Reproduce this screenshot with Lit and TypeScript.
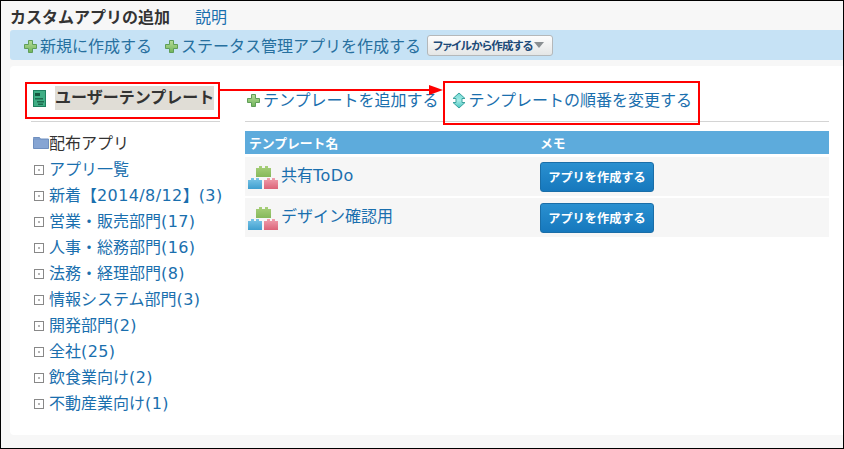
import { LitElement, html, css, svg } from "lit";
import { customElement } from "lit/decorators.js";

const plus = (id: string) => html`<svg class="plus" width="13" height="13" viewBox="0 0 13 13"><defs><linearGradient id=${id} x1="0" y1="0" x2="0" y2="1"><stop offset="0" stop-color="#b6dc98"/><stop offset="1" stop-color="#71b45a"/></linearGradient></defs><path d="M4.500.5h4v4h4v4h-4v4h-4v-4h-4v-4h4z" fill="url(#${id})" stroke="#5f9e58" stroke-linejoin="round"/></svg>`;

const blocks = (id: string) => html`<svg class="blocks" width="30" height="23" viewBox="0 0 30 23"><defs>
  <linearGradient id="${id}g" x1="0" y1="0" x2="0" y2="1"><stop offset="0" stop-color="#a8d07a"/><stop offset="1" stop-color="#86b85a"/></linearGradient>
  <linearGradient id="${id}b" x1="0" y1="0" x2="0" y2="1"><stop offset="0" stop-color="#7cc6e8"/><stop offset="1" stop-color="#3f9fcf"/></linearGradient>
  <linearGradient id="${id}r" x1="0" y1="0" x2="0" y2="1"><stop offset="0" stop-color="#f0a0ae"/><stop offset="1" stop-color="#dc6478"/></linearGradient></defs>
  <path d="M8 2h3V0h3v2h3V0h3v2h3v9H8z" fill="url(#${id}g)"/>
  <path d="M0 14h3v-2h3v2h2v-2h3v2h3v9H0z" fill="url(#${id}b)"/>
  <path d="M16 14h3v-2h3v2h2v-2h3v2h3v9H16z" fill="url(#${id}r)"/></svg>`;

const folder = html`<svg class="folder" width="16" height="13" viewBox="0 0 16 13"><path d="M.5 2.500V1.500h6l1 1.500h8v9.500H.5z" fill="#7d9ccb" stroke="#6f8fbf"/><rect x="1" y="4" width="14" height="8" fill="#86a5d3"/></svg>`;

const latin = (t: string) => t.split(/([0-9A-Za-z()\/]+)/).map((p, i) => (i % 2 ? html`<span class="lat">${p}</span>` : p));

const cats = ["アプリ一覧","新着【2014/8/12】(3)","営業・販売部門(17)","人事・総務部門(16)","法務・経理部門(8)","情報システム部門(3)","開発部門(2)","全社(25)","飲食業向け(2)","不動産業向け(1)"];
const rows = [["共有ToDo","a"],["デザイン確認用","b"]];

@customElement("app-root")
export class AppRoot extends LitElement {
  static styles = css`
    :host { display:block; width:844px; height:449px; box-sizing:border-box; border:1px solid #000; background:#f7f7f7; position:relative; overflow:hidden; font-family:"DejaVu Sans","Noto Sans CJK JP",sans-serif; font-size:16px; color:#0f6fb0; }
    a { color:#1a6fae; text-decoration:none; }
    .lat { letter-spacing:.4px; }
    .title { display:flex; align-items:center; height:29px; padding-left:9px; gap:25px; }
    .title b { color:#333; font-size:16px; font-weight:700; }
    .title a { font-size:16px; }
    .toolbar { height:30px; margin-left:9px; background:#c6e2f5; border-radius:3px 0 0 3px; display:flex; align-items:center; padding-left:14px; }
    .tool { display:flex; align-items:center; gap:3px; margin-right:13px; color:#27709f; white-space:nowrap; }
    .tool svg { margin-top:2px; }
    .tool:nth-child(2) { margin-right:6px; }
    .file { box-sizing:border-box; width:126px; height:21px; display:flex; align-items:center; padding-left:5px; gap:2px; border:1px solid #b4b8ba; border-radius:3px; background:linear-gradient(#fdfdfd,#e4e6e6); color:#1d4a78; font-size:11.500px; letter-spacing:-.7px; font-weight:700; white-space:nowrap; font-feature-settings:"palt"; }
    .tri { width:0; height:0; border-left:5px solid transparent; border-right:5px solid transparent; border-top:6px solid #8a8f92; }
    .panel { margin:6px 0 0 9px; height:369px; background:#fff; border-radius:4px 0 0 4px; display:flex; padding-top:16px; box-sizing:border-box; }
    .left { width:189px; margin-left:21px; flex:none; }
    .heading { height:40px; border-bottom:1px solid #d4d4d4; display:flex; align-items:center; box-sizing:border-box; padding:0 0 7px 2px; gap:9px; }
    .heading b { background:#e0ddd6; color:#333; font-size:16px; line-height:24px; font-weight:700; white-space:nowrap; }
    ul { list-style:none; margin:7px 0 0; padding:0 0 0 2px; }
    li { height:26px; display:flex; align-items:center; gap:5px; white-space:nowrap; }
    li.root { color:#333; gap:0; }
    .box { width:8px; height:8px; border:1px solid #888; position:relative; margin:3px 0 0 1px; flex:none; }
    .box::after { content:""; position:absolute; left:3px; top:3px; width:2px; height:2px; background:#333; transform:scale(.6); }
    .right { flex:1; margin:0 14px 0 25px; min-width:0; }
    .actions { height:40px; box-sizing:border-box; border-bottom:1px solid #d4d4d4; display:flex; align-items:center; padding:1px 0 7px 2px; white-space:nowrap; }
    .actions a { display:flex; align-items:center; }
    .actions a svg { margin-top:4px; }
    .actions a:first-child { gap:3px; margin-right:13px; }
    .actions a:last-child { gap:3px; }
    .thead { margin-top:9px; height:23px; background:#5dabdc; color:#fff; font-size:12.800px; font-weight:700; display:flex; align-items:center; padding-left:4px; }
    .c1 { width:291px; flex:none; display:flex; align-items:center; gap:3px; }
    .row { margin-top:3px; height:39px; background:#f6f6f6; display:flex; align-items:center; padding-left:3px; }
    .row + .row { margin-top:2px; }
    .row .c1 { width:292px; }
    .row a { margin-top:-6px; }
    .blocks { margin-top:2px; }
    .btn { box-sizing:border-box; width:114px; height:30px; margin-top:1px; border:1px solid #1a6ea8; border-radius:3px; background:linear-gradient(#2a90d0,#1678bd); color:#fff; font:700 12.200px "Noto Sans CJK JP",sans-serif; padding:0; white-space:nowrap; }
    .mark { position:absolute; border:2px solid #f00; box-sizing:border-box; pointer-events:none; }
    .m1 { left:24px; top:81px; width:195px; height:37px; }
    .m2 { left:442px; top:80px; width:257px; height:44px; }
    .arrow { position:absolute; left:218px; top:84px; pointer-events:none; }
  `;
  render() {
    return html`
      <div class="title"><b>カスタムアプリの追加</b><a>説明</a></div>
      <div class="toolbar">
        <span class="tool">${plus("p1")}新規に作成する</span>
        <span class="tool">${plus("p2")}ステータス管理アプリを作成する</span>
        <span class="file">ファイルから作成する<i class="tri"></i></span>
      </div>
      <div class="panel">
        <div class="left">
          <div class="heading">
            <svg width="13" height="17" viewBox="0 0 13 17"><rect x=".5" y=".5" width="12" height="16" fill="#3fae84" stroke="#1f7f5f"/><path d="M2 3h5v3H2z" fill="#15573f"/><path d="M2 8h8v1.500H2zM4 11h7v1.500H4zM5 13.500h5V15H5z" fill="#1e6a4e"/></svg>
            <b>ユーザーテンプレート</b>
          </div>
          <ul>
            <li class="root">${folder}配布アプリ</li>
            ${cats.map((c) => html`<li><span class="box"></span><a>${latin(c)}</a></li>`)}
          </ul>
        </div>
        <div class="right">
          <div class="actions">
            <a>${plus("p3")}テンプレートを追加する</a>
            <a><svg width="14" height="17" viewBox="0 0 14 17"><defs><linearGradient id="sw" x1="0" y1="0" x2="0" y2="1"><stop offset="0" stop-color="#6fd8d2"/><stop offset=".5" stop-color="#a5ebe6"/><stop offset="1" stop-color="#45c4bf"/></linearGradient></defs><path d="M7 1l6 5.500H10v4h3L7 16 1 10.500h3v-4H1z" fill="url(#sw)" stroke="#3aa39f" stroke-linejoin="round"/></svg>テンプレートの順番を変更する</a>
          </div>
          <div class="thead"><span class="c1">テンプレート名</span><span>メモ</span></div>
          ${rows.map(([n, id]) => html`<div class="row"><span class="c1">${blocks(id)}<a>${latin(n)}</a></span><button class="btn">アプリを作成する</button></div>`)}
        </div>
      </div>
      <div class="mark m1"></div>
      <div class="mark m2"></div>
      <svg class="arrow" width="224" height="12" viewBox="0 0 224 12">${svg`<path d="M0 5h212" stroke="#f00" stroke-width="2"/><path d="M210 0l14 5-14 5z" fill="#f00"/>`}</svg>
    `;
  }
}
